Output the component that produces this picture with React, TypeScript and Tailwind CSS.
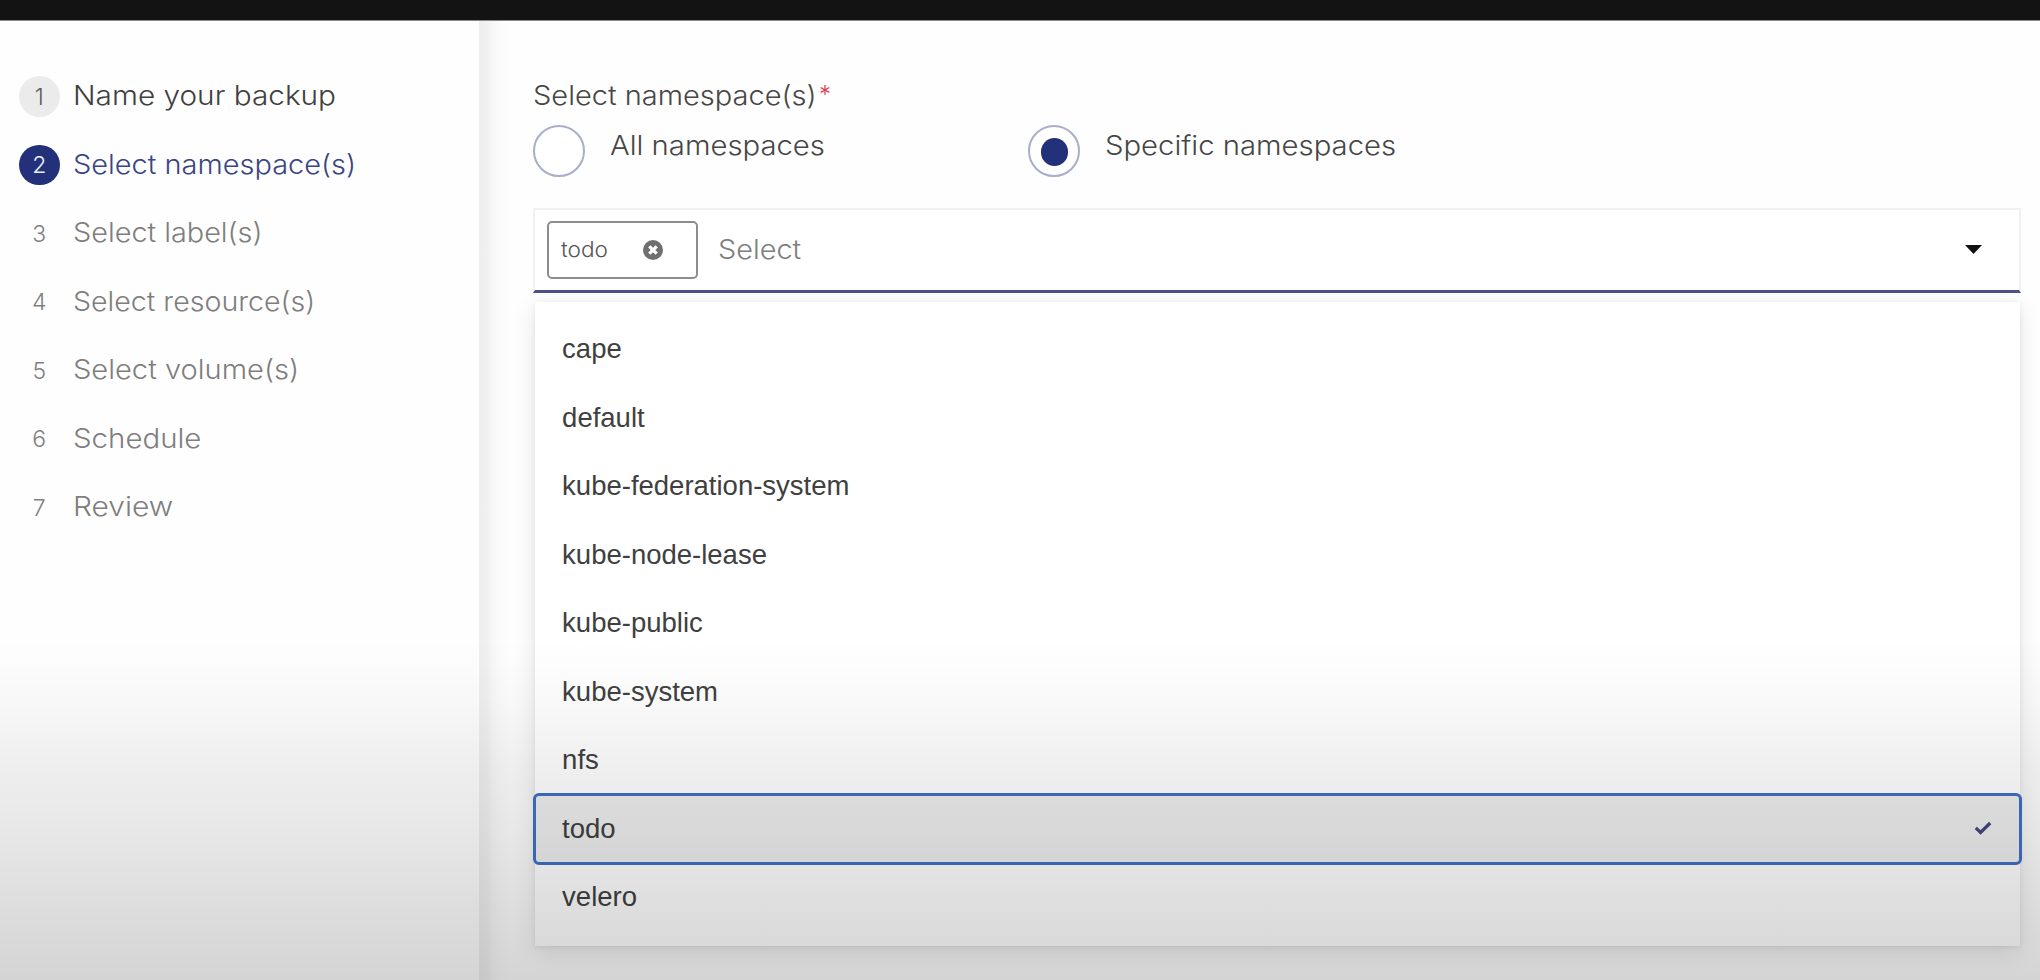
const steps = [
  { label: "Name your backup", state: "done", stretch: "scale-x-[1.102]" },
  { label: "Select namespace(s)", state: "active", stretch: "scale-x-[1.072]" },
  { label: "Select label(s)", state: "todo", stretch: "scale-x-[1.068]" },
  { label: "Select resource(s)", state: "todo", stretch: "scale-x-[1.058]" },
  { label: "Select volume(s)", state: "todo", stretch: "scale-x-[1.077]" },
  { label: "Schedule", state: "todo", stretch: "scale-x-[1.09]" },
  { label: "Review", state: "todo", stretch: "scale-x-[1.108]" },
];

const badgeStyles: Record<string, string> = {
  done: "bg-[#ebebeb] text-[#5c5c5c]",
  active: "bg-[#223179] text-[#eef0fa]",
  todo: "text-[#808080]",
};

const labelStyles: Record<string, string> = {
  done: "text-[#404040]",
  active: "text-[#3a4585]",
  todo: "text-[#7e7e7e]",
};

const namespaces = [
  "cape",
  "default",
  "kube-federation-system",
  "kube-node-lease",
  "kube-public",
  "kube-system",
  "nfs",
  "todo",
  "velero",
];

function Sidebar() {
  return (
    <ol className="w-[478.5px] shrink-0 pl-[19px] pt-[41px]">
      {steps.map((step, i) => (
        <li key={step.label} className="flex h-[68.5px] items-center gap-[13.4px]">
          <span
            className={
              "flex size-[40.5px] items-center justify-center rounded-full pt-[2px] text-[23px] leading-none " +
              badgeStyles[step.state]
            }
          >
            {i + 1}
          </span>
          <span
            className={
              "inline-block origin-left whitespace-nowrap text-[27px] leading-10 " +
              labelStyles[step.state] +
              " " +
              step.stretch
            }
          >
            {step.label}
          </span>
        </li>
      ))}
    </ol>
  );
}

function Radio({ label, checked, className }: { label: string; checked?: boolean; className: string }) {
  return (
    <label className={"flex items-start gap-[25.2px] " + className}>
      <span className="flex size-[52px] shrink-0 items-center justify-center rounded-full border-2 border-[#a9aeca] bg-white pt-[3px]">
        {checked && <span className="size-[27.5px] rounded-full bg-[#223179]" />}
      </span>
      <span className="mt-[1px] inline-block origin-left scale-x-[1.084] whitespace-nowrap text-[27px] leading-10 text-[#464646]">
        {label}
      </span>
    </label>
  );
}

function Chip() {
  return (
    <span className="flex h-[58px] w-[151px] items-center rounded-[5px] border-2 border-[#8c8c8c] pl-3">
      <span className="w-[82.5px]">
        <span className="inline-block origin-left scale-x-[1.076] text-[21px] text-[#555555]">todo</span>
      </span>
      <svg viewBox="0 0 20 20" className="size-5">
        <circle cx="10" cy="10" r="10" fill="#6f6f6f" />
        <path d="M6.3 6.3 13.7 13.7 M13.7 6.3 6.3 13.7" stroke="#fff" strokeWidth="3.3" />
      </svg>
    </span>
  );
}

function Dropdown() {
  return (
    <ul
      className="mt-[9px] ml-[1.5px] mr-[1px] h-[644px] bg-white pt-[13.2px] text-[27.5px] font-normal text-[#404040] shadow-[0_6px_22px_rgba(0,0,0,0.1),0_1px_5px_rgba(0,0,0,0.07)]"
      style={{ fontFamily: "'Liberation Sans', sans-serif" }}
    >
      {namespaces.map((name) => (
        <li
          key={name}
          className={
            "flex h-[68.5px] items-center justify-between pl-[27.6px] pr-[27.5px] pb-px " +
            (name === "todo" ? "rounded-[4px] bg-[#ededed] outline-3 -outline-offset-1 outline-[#3f70c4]" : "")
          }
        >
          {name}
          {name === "todo" && (
            <svg viewBox="0 0 18 14" className="h-[14px] w-[18px]">
              <path d="M1.8 6.8 6.6 11.4 16.2 2" fill="none" stroke="#454580" strokeWidth="3.2" />
            </svg>
          )}
        </li>
      ))}
    </ul>
  );
}

export default function App() {
  return (
    <div
      className="relative flex h-[980px] w-[2040px] flex-col overflow-hidden bg-[#fefefe] font-light"
      style={{ fontFamily: "Inter, sans-serif" }}
    >
      <header className="h-[21px] shrink-0 border-b border-[#8a8a8a] bg-[#131313]" />
      <div className="flex min-h-0 flex-1">
        <Sidebar />
        <main className="min-w-0 flex-1 bg-[linear-gradient(90deg,#eeeeee_0,#f0f0f0_8px,#f8f8f8_14px,#fbfbfb_20px,#fefefe_30px)] pl-[54.5px] pr-[19.5px] pt-[54.5px]">
          <h1 className="flex h-10 text-[27px] leading-10 text-[#464646]">
            <span className="w-[286px]">
              <span className="inline-block origin-left scale-x-[1.074] whitespace-nowrap">Select namespace(s)</span>
            </span>
            <span className="text-[24px] leading-[37px] text-[#e03a55]">*</span>
          </h1>
          <div className="mt-[9px] flex">
            <Radio label="All namespaces" className="w-[495.3px]" />
            <Radio label="Specific namespaces" checked className="" />
          </div>
          <div className="mt-[31px] flex h-[85.5px] items-center border-2 border-b-3 border-[#f1f1f1] border-b-[#4a5288] bg-white pl-[11.5px] pr-[36.5px]">
            <Chip />
            <span className="ml-[20px] flex-1 text-[27px] leading-10 text-[#7e7e7e]">
              <span className="inline-block origin-left scale-x-[1.068]">Select</span>
            </span>
            <svg viewBox="0 0 17 9" className="h-[9px] w-[17px]">
              <path d="M0 0H17L8.5 9Z" fill="#111" />
            </svg>
          </div>
          <Dropdown />
        </main>
      </div>
      <div className="pointer-events-none absolute inset-x-0 bottom-0 h-[340px] bg-[linear-gradient(180deg,transparent_0,rgba(0,0,0,0.025)_60px,rgba(0,0,0,0.063)_127px,rgba(0,0,0,0.09)_193px,rgba(0,0,0,0.125)_260px,rgba(0,0,0,0.163)_340px)]" />
    </div>
  );
}
